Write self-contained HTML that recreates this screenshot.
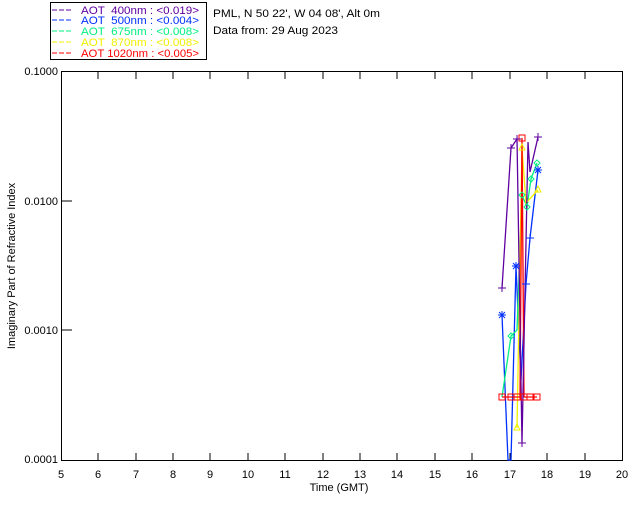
<!DOCTYPE html><html><head><style>body{margin:0;background:#fff}svg{display:block}text{font-family:"Liberation Sans",sans-serif;font-size:11px;white-space:pre}</style></head><body>
<svg width="640" height="512" xmlns="http://www.w3.org/2000/svg">
<rect x="50.5" y="2.5" width="156" height="57" fill="none" stroke="#000"/>
<g font-size="11">
<line x1="52" y1="10" x2="73" y2="10" stroke="#6000a0" stroke-dasharray="5,2"/><text x="81" y="14" fill="#6000a0" textLength="118" lengthAdjust="spacingAndGlyphs">AOT  400nm : &lt;0.019&gt;</text>
<line x1="52" y1="20" x2="73" y2="20" stroke="#0030ff" stroke-dasharray="5,2"/><text x="81" y="24" fill="#0030ff" textLength="118" lengthAdjust="spacingAndGlyphs">AOT  500nm : &lt;0.004&gt;</text>
<line x1="52" y1="31" x2="73" y2="31" stroke="#00f080" stroke-dasharray="5,2"/><text x="81" y="35" fill="#00f080" textLength="118" lengthAdjust="spacingAndGlyphs">AOT  675nm : &lt;0.008&gt;</text>
<line x1="52" y1="42" x2="73" y2="42" stroke="#f0f000" stroke-dasharray="5,2"/><text x="81" y="46" fill="#f0f000" textLength="118" lengthAdjust="spacingAndGlyphs">AOT  870nm : &lt;0.008&gt;</text>
<line x1="52" y1="53" x2="73" y2="53" stroke="#ff0000" stroke-dasharray="5,2"/><text x="81" y="57" fill="#ff0000" textLength="118" lengthAdjust="spacingAndGlyphs">AOT 1020nm : &lt;0.005&gt;</text>
</g>
<text x="213" y="17" textLength="167" lengthAdjust="spacingAndGlyphs">PML, N 50 22', W 04 08', Alt 0m</text>
<text x="213" y="34" textLength="125" lengthAdjust="spacingAndGlyphs">Data from: 29 Aug 2023</text>
<rect x="61.5" y="71.5" width="561" height="389" fill="none" stroke="#000"/>
<g stroke="#000">
<path d="M98 71v8M136 71v8M173 71v8M210 71v8M248 71v8M285 71v8M323 71v8M360 71v8M397 71v8M435 71v8M472 71v8M510 71v8M547 71v8M585 71v8"/>
<path d="M98 461v-8M136 461v-8M173 461v-8M210 461v-8M248 461v-8M285 461v-8M323 461v-8M360 461v-8M397 461v-8M435 461v-8M472 461v-8M510 461v-8M547 461v-8M585 461v-8"/>
<path d="M61 201h11M61 330h11"/>
</g>
<g text-anchor="end"><text x="58" y="75">0.1000</text><text x="58" y="205">0.0100</text><text x="58" y="334">0.0010</text><text x="58" y="463">0.0001</text></g>
<g text-anchor="middle"><text x="61" y="478">5</text><text x="98" y="478">6</text><text x="136" y="478">7</text><text x="173" y="478">8</text><text x="210" y="478">9</text><text x="248" y="478">10</text><text x="285" y="478">11</text><text x="323" y="478">12</text><text x="360" y="478">13</text><text x="397" y="478">14</text><text x="435" y="478">15</text><text x="472" y="478">16</text><text x="510" y="478">17</text><text x="547" y="478">18</text><text x="585" y="478">19</text><text x="622" y="478">20</text>
<text x="339" y="491">Time (GMT)</text></g>
<text transform="translate(15,266) rotate(-90)" text-anchor="middle">Imaginary Part of Refractive Index</text>
<g fill="none" stroke-width="1.3">
<polyline stroke="#0030ff" points="502,315 508,460 511,460 516,266 521,380 526,284 530,238 538,170"/>
<polyline stroke="#00f080" points="502,397 511,336 517,330 522,195 527,207 531,179 537,163"/>
<polyline stroke="#f0f000" points="517,428 522,148 526,203 538,190"/>
<polyline stroke="#ff0000" points="502,397 511,397 517,397 520,397 522,138 524,397 530,397 537,397"/>
<polyline stroke="#6000a0" points="502,288 511,148 517,139 522,443 528,142 530,172 538,137"/>
</g>
<g fill="none" stroke="#ff0000"><rect x="499" y="394" width="6" height="6"/><rect x="508" y="394" width="6" height="6"/><rect x="514" y="394" width="6" height="6"/><rect x="521" y="394" width="6" height="6"/><rect x="527" y="394" width="6" height="6"/><rect x="534" y="394" width="6" height="6"/><rect x="519" y="135" width="6" height="6"/></g>
<g stroke="#6000a0"><path d="M502 284v8M498 288h8M511 144v8M507 148h8M517 135v8M513 139h8M522 439v8M518 443h8M538 133v8M534 137h8"/></g>
<g stroke="#0030ff"><path d="M502 311v8M498 315h8M499 312l6 6M505 312l-6 6M516 262v8M512 266h8M513 263l6 6M519 263l-6 6M526 280v8M522 284h8M530 234v8M526 238h8M538 166v8M534 170h8M535 167l6 6M541 167l-6 6"/></g>
<g fill="none" stroke="#00f080"><path d="M511 333l3 3-3 3-3-3zM537 160l3 3-3 3-3-3zM522 192l3 3-3 3-3-3zM531 176l3 3-3 3-3-3zM527 204l3 3-3 3-3-3z"/></g>
<g fill="none" stroke="#f0f000"><path d="M517 424l3 6h-6zM522 144l3 6h-6zM538 186l3 6h-6z"/></g>
</svg></body></html>
